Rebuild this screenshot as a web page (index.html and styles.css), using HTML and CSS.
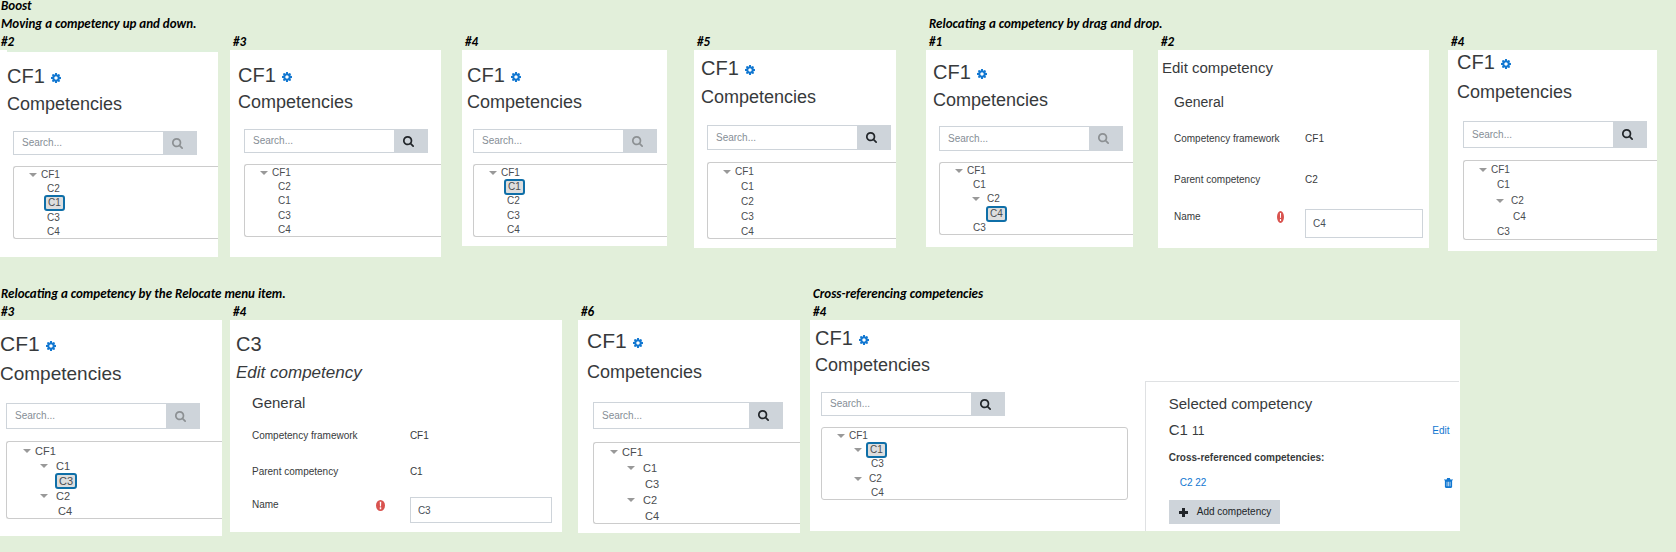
FILE: index.html
```html
<!DOCTYPE html>
<html lang="en">
<head>
<meta charset="utf-8">
<title>Boost – competency frameworks</title>
<link rel="stylesheet" href="styles.css">
</head>
<body>
<svg class="sprite" aria-hidden="true">
  <symbol id="cog" viewBox="0 128 1536 1536"><path d="M1024 896q0-106-75-181t-181-75-181 75-75 181 75 181 181 75 181-75 75-181zm512-109v222q0 12-8 23t-20 13l-185 28q-19 54-39 91 35 50 107 138 10 12 10 25t-9 23q-27 37-99 108t-94 71q-12 0-26-9l-138-108q-44 23-91 38-16 136-29 186-7 28-36 28h-222q-14 0-24.500-8.500t-11.500-21.500l-28-184q-49-16-90-37l-141 107q-10 9-25 9-14 0-25-11-126-114-165-168-7-10-7-23 0-12 8-23 15-21 51-66.500t54-70.500q-27-50-41-99l-183-27q-13-2-21-12.500t-8-23.500v-222q0-12 8-23t19-13l186-28q14-46 39-92-40-57-107-138-10-12-10-24 0-10 9-23 26-36 98.500-107.500t94.500-71.500q13 0 26 10l138 107q44-23 91-38 16-136 29-186 7-28 36-28h222q14 0 24.500 8.500t11.500 21.500l28 184q49 16 90 37l142-107q9-9 24-9 13 0 25 10 129 119 165 170 7 8 7 22 0 12-8 23-15 21-51 66.500t-54 70.500q26 50 41 98l183 28q13 2 21 12.500t8 23.500z"/></symbol>
  <symbol id="magnifier" viewBox="0 128 1664 1664"><path d="M1152 832q0-185-131.500-316.500t-316.500-131.500-316.500 131.500-131.500 316.500 131.500 316.500 316.500 131.500 316.500-131.500 131.500-316.500zm512 832q0 52-38 90t-90 38q-54 0-90-38l-343-342q-179 124-399 124-143 0-273.500-55.500t-225-150-150-225-55.500-273.500 55.500-273.500 150-225 225-150 273.500-55.500 273.500 55.500 225 150 150 225 55.500 273.500q0 220-124 399l343 343q37 37 37 90z"/></symbol>
  <symbol id="caret" viewBox="0 0 8 5" preserveAspectRatio="none"><path d="M0 0h8L4 5z"/></symbol>
  <symbol id="required" viewBox="0 0 12 12" preserveAspectRatio="none"><path fill-rule="evenodd" d="M6 0a6 6 0 1 1 0 12A6 6 0 0 1 6 0zM5 2l.3 5h1.400L7 2zM5 8v2h2V8z"/></symbol>
  <symbol id="plus" viewBox="0 0 9 9"><path d="M3 0h3v3h3v3H6v3H3V6H0V3h3z"/></symbol>
  <symbol id="trash" viewBox="0 0 10 11"><path fill-rule="evenodd" d="M3.500 0h3l.6 1.500H10v1H9V10l-1 1H2l-1-1V2.500H0v-1h2.900zM3 4v5h.7V4zm1.700 0v5h.7V4zm1.700 0v5h.7V4z"/></symbol>
</svg>

<main class="board">
  <h1 class="label label-top">Boost</h1>

  <div class="band band-upper">
    <section class="group">
      <h2 class="label">Moving a competency up and down.</h2>
      <div class="steps steps-moving">
        <figure class="step">
          <figcaption class="label">#2</figcaption>
          <div class="panel move-2">
            <h3 class="title">CF1 <button class="gear" type="button" aria-label="Settings"><svg><use href="#cog"/></svg></button></h3>
            <h4 class="subtitle">Competencies</h4>
            <form class="search"><input class="query" type="text" placeholder="Search..." aria-label="Search"><button class="go" type="button" aria-label="Search" disabled><svg><use href="#magnifier"/></svg></button></form>
            <ul class="tree">
              <li class="root"><svg class="caret"><use href="#caret"/></svg><span>CF1</span></li>
              <li class="leaf"><span>C2</span></li>
              <li class="leaf"><span class="selected">C1</span></li>
              <li class="leaf"><span>C3</span></li>
              <li class="leaf"><span>C4</span></li>
            </ul>
          </div>
        </figure>
        <figure class="step">
          <figcaption class="label">#3</figcaption>
          <div class="panel move-3">
            <h3 class="title">CF1 <button class="gear" type="button" aria-label="Settings"><svg><use href="#cog"/></svg></button></h3>
            <h4 class="subtitle">Competencies</h4>
            <form class="search"><input class="query" type="text" placeholder="Search..." aria-label="Search"><button class="go" type="button" aria-label="Search"><svg><use href="#magnifier"/></svg></button></form>
            <ul class="tree">
              <li class="root"><svg class="caret"><use href="#caret"/></svg><span>CF1</span></li>
              <li class="leaf"><span>C2</span></li>
              <li class="leaf"><span>C1</span></li>
              <li class="leaf"><span>C3</span></li>
              <li class="leaf"><span>C4</span></li>
            </ul>
          </div>
        </figure>
        <figure class="step">
          <figcaption class="label">#4</figcaption>
          <div class="panel move-4">
            <h3 class="title">CF1 <button class="gear" type="button" aria-label="Settings"><svg><use href="#cog"/></svg></button></h3>
            <h4 class="subtitle">Competencies</h4>
            <form class="search"><input class="query" type="text" placeholder="Search..." aria-label="Search"><button class="go" type="button" aria-label="Search" disabled><svg><use href="#magnifier"/></svg></button></form>
            <ul class="tree">
              <li class="root"><svg class="caret"><use href="#caret"/></svg><span>CF1</span></li>
              <li class="leaf"><span class="selected">C1</span></li>
              <li class="leaf"><span>C2</span></li>
              <li class="leaf"><span>C3</span></li>
              <li class="leaf"><span>C4</span></li>
            </ul>
          </div>
        </figure>
        <figure class="step">
          <figcaption class="label">#5</figcaption>
          <div class="panel move-5">
            <h3 class="title">CF1 <button class="gear" type="button" aria-label="Settings"><svg><use href="#cog"/></svg></button></h3>
            <h4 class="subtitle">Competencies</h4>
            <form class="search"><input class="query" type="text" placeholder="Search..." aria-label="Search"><button class="go" type="button" aria-label="Search"><svg><use href="#magnifier"/></svg></button></form>
            <ul class="tree">
              <li class="root"><svg class="caret"><use href="#caret"/></svg><span>CF1</span></li>
              <li class="leaf"><span>C1</span></li>
              <li class="leaf"><span>C2</span></li>
              <li class="leaf"><span>C3</span></li>
              <li class="leaf"><span>C4</span></li>
            </ul>
          </div>
        </figure>
      </div>
    </section>

    <section class="group group-inset">
      <h2 class="label">Relocating a competency by drag and drop.</h2>
      <div class="steps steps-drag">
        <figure class="step">
          <figcaption class="label">#1</figcaption>
          <div class="panel drag-1">
            <h3 class="title">CF1 <button class="gear" type="button" aria-label="Settings"><svg><use href="#cog"/></svg></button></h3>
            <h4 class="subtitle">Competencies</h4>
            <form class="search"><input class="query" type="text" placeholder="Search..." aria-label="Search"><button class="go" type="button" aria-label="Search" disabled><svg><use href="#magnifier"/></svg></button></form>
            <ul class="tree">
              <li class="root"><svg class="caret"><use href="#caret"/></svg><span>CF1</span></li>
              <li class="leaf"><span>C1</span></li>
              <li class="branch"><svg class="caret"><use href="#caret"/></svg><span>C2</span></li>
              <li class="leaf-deep"><span class="selected">C4</span></li>
              <li class="leaf"><span>C3</span></li>
            </ul>
          </div>
        </figure>
        <figure class="step">
          <figcaption class="label">#2</figcaption>
          <div class="panel editor drag-2">
            <h3 class="edit-title">Edit competency</h3>
            <form class="fields">
              <h4 class="legend">General</h4>
              <div class="field"><span>Competency framework</span><span>CF1</span></div>
              <div class="field"><span>Parent competency</span><span>C2</span></div>
              <div class="field"><label class="name-label" for="name-drag">Name<svg class="required" role="img" aria-label="Required"><use href="#required"/></svg></label><input class="name" id="name-drag" type="text" value="C4"></div>
            </form>
          </div>
        </figure>
        <figure class="step">
          <figcaption class="label">#4</figcaption>
          <div class="panel drag-4">
            <h3 class="title">CF1 <button class="gear" type="button" aria-label="Settings"><svg><use href="#cog"/></svg></button></h3>
            <h4 class="subtitle">Competencies</h4>
            <form class="search"><input class="query" type="text" placeholder="Search..." aria-label="Search"><button class="go" type="button" aria-label="Search"><svg><use href="#magnifier"/></svg></button></form>
            <ul class="tree">
              <li class="root"><svg class="caret"><use href="#caret"/></svg><span>CF1</span></li>
              <li class="leaf"><span>C1</span></li>
              <li class="branch"><svg class="caret"><use href="#caret"/></svg><span>C2</span></li>
              <li class="leaf-deep"><span>C4</span></li>
              <li class="leaf"><span>C3</span></li>
            </ul>
          </div>
        </figure>
      </div>
    </section>
  </div>

  <div class="band band-lower">
    <section class="group">
      <h2 class="label">Relocating a competency by the Relocate menu item.</h2>
      <div class="steps steps-menu">
        <figure class="step">
          <figcaption class="label">#3</figcaption>
          <div class="panel menu-3">
            <h3 class="title">CF1 <button class="gear" type="button" aria-label="Settings"><svg><use href="#cog"/></svg></button></h3>
            <h4 class="subtitle">Competencies</h4>
            <form class="search"><input class="query" type="text" placeholder="Search..." aria-label="Search"><button class="go" type="button" aria-label="Search" disabled><svg><use href="#magnifier"/></svg></button></form>
            <ul class="tree tree-large">
              <li class="root"><svg class="caret"><use href="#caret"/></svg><span>CF1</span></li>
              <li class="branch"><svg class="caret"><use href="#caret"/></svg><span>C1</span></li>
              <li class="leaf-deep"><span class="selected">C3</span></li>
              <li class="branch"><svg class="caret"><use href="#caret"/></svg><span>C2</span></li>
              <li class="leaf-deep"><span>C4</span></li>
            </ul>
          </div>
        </figure>
        <figure class="step">
          <figcaption class="label">#4</figcaption>
          <div class="panel editor menu-4">
            <h3 class="title">C3</h3>
            <h4 class="edit-title">Edit competency</h4>
            <form class="fields">
              <h5 class="legend">General</h5>
              <div class="field"><span>Competency framework</span><span>CF1</span></div>
              <div class="field"><span>Parent competency</span><span>C1</span></div>
              <div class="field"><label class="name-label" for="name-menu">Name<svg class="required" role="img" aria-label="Required"><use href="#required"/></svg></label><input class="name" id="name-menu" type="text" value="C3"></div>
            </form>
          </div>
        </figure>
        <figure class="step">
          <figcaption class="label">#6</figcaption>
          <div class="panel menu-6">
            <h3 class="title">CF1 <button class="gear" type="button" aria-label="Settings"><svg><use href="#cog"/></svg></button></h3>
            <h4 class="subtitle">Competencies</h4>
            <form class="search"><input class="query" type="text" placeholder="Search..." aria-label="Search"><button class="go" type="button" aria-label="Search"><svg><use href="#magnifier"/></svg></button></form>
            <ul class="tree tree-large">
              <li class="root"><svg class="caret"><use href="#caret"/></svg><span>CF1</span></li>
              <li class="branch"><svg class="caret"><use href="#caret"/></svg><span>C1</span></li>
              <li class="leaf-deep"><span>C3</span></li>
              <li class="branch"><svg class="caret"><use href="#caret"/></svg><span>C2</span></li>
              <li class="leaf-deep"><span>C4</span></li>
            </ul>
          </div>
        </figure>
      </div>
    </section>

    <section class="group group-inset group-cross">
      <h2 class="label">Cross-referencing competencies</h2>
      <figure class="step">
        <figcaption class="label">#4</figcaption>
        <div class="panel cross-4">
          <h3 class="title">CF1 <button class="gear" type="button" aria-label="Settings"><svg><use href="#cog"/></svg></button></h3>
          <h4 class="subtitle">Competencies</h4>
          <div class="split">
            <div class="split-tree">
              <form class="search"><input class="query" type="text" placeholder="Search..." aria-label="Search"><button class="go" type="button" aria-label="Search"><svg><use href="#magnifier"/></svg></button></form>
              <ul class="tree">
                <li class="root"><svg class="caret"><use href="#caret"/></svg><span>CF1</span></li>
                <li class="branch"><svg class="caret"><use href="#caret"/></svg><span class="selected">C1</span></li>
                <li class="leaf-deep"><span>C3</span></li>
                <li class="branch"><svg class="caret"><use href="#caret"/></svg><span>C2</span></li>
                <li class="leaf-deep"><span>C4</span></li>
              </ul>
            </div>
            <aside class="detail">
              <h4 class="detail-title">Selected competency</h4>
              <div class="detail-name">
                <h5 class="competency">C1 <small>11</small></h5>
                <a class="link" href="#edit">Edit</a>
              </div>
              <p class="cross-label">Cross-referenced competencies:</p>
              <div class="cross-row">
                <a class="link" href="#c2">C2 22</a>
                <button class="delete" type="button" aria-label="Delete"><svg><use href="#trash"/></svg></button>
              </div>
              <button class="add" type="button"><svg><use href="#plus"/></svg>Add competency</button>
            </aside>
          </div>
        </div>
      </figure>
    </section>
  </div>
</main>
</body>
</html>
```

FILE: styles.css
```css
* {
  box-sizing: border-box;
}

body {
  margin: 0;
  background: #e2efda;
  color: #373a3c;
  font: 10px/16px "Liberation Sans", Arial, sans-serif;
}

h1, h2, h3, h4, h5, p, ul, figure {
  margin: 0;
  padding: 0;
  font-weight: 400;
}

button, input {
  margin: 0;
  padding: 0;
  border: 0;
  border-radius: 0;
  background: none;
  color: inherit;
  font: inherit;
}

svg {
  display: block;
  flex: none;
  fill: currentColor;
}

.sprite {
  position: absolute;
  width: 0;
  height: 0;
}

/* Board: captions and the grid of steps */

.label {
  padding: 1px 0 0 1px;
  color: #000;
  font: italic 700 13px/17px Carlito, Lato, sans-serif;
  white-space: nowrap;
}

.label-top {
  padding: 0 0 2px 1px;
  line-height: 12px;
}

.step + .step > .label,
.group-inset .label {
  padding-left: 3px;
}

.band {
  display: grid;
}

.band-upper {
  grid-template-columns: minmax(0, 926fr) minmax(0, 750fr);
}

.band-lower {
  grid-template-columns: minmax(0, 810fr) minmax(0, 866fr);
  margin-top: 27px;
}

.steps {
  display: grid;
  align-items: start;
}

.steps-moving {
  grid-template-columns: minmax(0, 230fr) repeat(3, minmax(0, 232fr));
}

.steps-drag {
  grid-template-columns: minmax(0, 232fr) minmax(0, 290fr) minmax(0, 228fr);
}

.steps-menu {
  grid-template-columns: minmax(0, 230fr) minmax(0, 348fr) minmax(0, 232fr);
}

.group-cross {
  padding-right: 25%;
}

/* Tree panel */

.panel {
  --top: 13px;
  --left: 8px;
  --right: 20px;
  --bottom: 20px;
  --heading-gap: 4px;
  --search-gap: 15px;
  --search-height: 24px;
  --search-width: 184px;
  --tree-gap: 11px;
  --tree-height: 73px;
  margin-right: var(--right);
  padding: var(--top) 0 var(--bottom) var(--left);
  background: #fff;
  overflow: hidden;
}

.title {
  display: flex;
  align-items: baseline;
  gap: 6px;
  font-size: 20px;
  line-height: 24px;
}

.subtitle {
  margin-top: var(--heading-gap);
  font-size: 18px;
  line-height: 24px;
}

.gear {
  color: #1177d1;
  line-height: 10px;
}

.gear svg {
  width: 10px;
  height: 10px;
}

.search {
  display: flex;
  max-width: var(--search-width);
  height: var(--search-height);
  margin: var(--search-gap) 4px 0 6px;
}

.query {
  flex: 1;
  min-width: 0;
  padding: 0 8px;
  border: 1px solid #ced4da;
  border-right: 0;
}

.query::placeholder {
  color: #868e96;
  opacity: 1;
}

.go {
  flex: none;
  width: 34px;
  padding-left: 9px;
  background: #ced4da;
  color: #212529;
}

.go:disabled {
  color: #8c9093;
}

.go svg {
  width: 11px;
  height: 11px;
}

.tree {
  display: grid;
  grid-auto-rows: minmax(0, 1fr);
  height: var(--tree-height);
  margin: var(--tree-gap) 0 0 6px;
  border: 1px solid #ccc;
  border-right: 0;
  border-radius: 3px 0 0 3px;
  color: #4a4d50;
  line-height: 12px;
  list-style: none;
}

.tree li {
  display: flex;
  align-items: center;
  padding-top: 2px;
}

.root {
  gap: 4px;
  padding-left: 15px;
}

.leaf {
  padding-left: 33px;
}

.branch {
  gap: 7px;
  padding-left: 32px;
}

.leaf-deep {
  padding-left: 49px;
}

.tree-large {
  font-size: 11px;
}

.tree-large .root {
  padding-left: 16px;
}

.tree-large .branch {
  gap: 8px;
  padding-left: 33px;
}

.tree-large .leaf-deep {
  padding-left: 51px;
}

.caret {
  width: 8px;
  height: 4px;
  color: #999;
}

.selected {
  flex: none;
  margin: -2px 0 -2px -3px;
  padding: 0 2px;
  border: 2px solid #0f6fa8;
  border-radius: 3px;
  background: #dedede;
}

/* Spacing of the single steps */

.move-2 {
  --top: 14px;
  --left: 7px;
  --right: 12px;
  --bottom: 18px;
  background: linear-gradient(#dff0dc, #dff0dc) 7px 0 / 100% 2px no-repeat #fff;
}

.move-3 {
  --right: 21px;
  --heading-gap: 3px;
}

.move-4 {
  --left: 5px;
  --right: 27px;
  --bottom: 9px;
  --heading-gap: 3px;
}

.move-5 {
  --top: 6px;
  --left: 7px;
  --right: 30px;
  --bottom: 9px;
  --heading-gap: 5px;
  --search-gap: 16px;
  --search-height: 25px;
  --tree-gap: 12px;
  --tree-height: 77px;
}

.drag-1 {
  --top: 10px;
  --left: 7px;
  --right: 25px;
  --bottom: 12px;
  --search-gap: 14px;
  --search-height: 25px;
}

.drag-4 {
  --top: 0px;
  --left: 9px;
  --right: 19px;
  --bottom: 11px;
  --heading-gap: 6px;
  --search-gap: 17px;
  --search-height: 27px;
  --tree-gap: 12px;
  --tree-height: 80px;
}

.menu-3 {
  --top: 12px;
  --left: 0px;
  --right: 8px;
  --bottom: 17px;
  --heading-gap: 6px;
  --search-gap: 17px;
  --search-height: 26px;
  --search-width: 194px;
  --tree-gap: 12px;
  --tree-height: 78px;
}

.menu-6 {
  --top: 9px;
  --left: 9px;
  --right: 10px;
  --bottom: 9px;
  --heading-gap: 7px;
  --search-gap: 18px;
  --search-height: 27px;
  --search-width: 190px;
  --tree-gap: 13px;
  --tree-height: 82px;
}

.menu-3 .title,
.menu-6 .title {
  font-size: 21px;
}

.menu-3 .subtitle {
  font-size: 19px;
}

/* Edit form */

.edit-title,
.legend {
  line-height: 24px;
}

.field {
  display: grid;
  grid-template-columns: minmax(0, 10fr) minmax(0, 9fr);
  align-items: start;
}

.name-label {
  display: flex;
  align-items: center;
  justify-content: space-between;
}

.required {
  color: #d9534f;
}

.name {
  width: 100%;
  padding: 0 7px;
  border: 1px solid #ced4da;
  color: #495057;
}

.drag-2 {
  --top: 6px;
  --left: 4px;
  --right: 19px;
  --bottom: 10px;
}

.drag-2 .edit-title {
  font-size: 15px;
}

.drag-2 .fields {
  padding: 10px 6px 0 12px;
}

.drag-2 .legend {
  margin-bottom: 17px;
  font-size: 14px;
}

.drag-2 .field + .field {
  margin-top: 25px;
}

.drag-2 .field:last-child {
  margin-top: 21px;
}

.drag-2 .name {
  height: 29px;
}

.drag-2 .required {
  width: 7px;
  height: 12px;
  margin-right: 21px;
}

.menu-4 {
  --top: 12px;
  --left: 6px;
  --right: 16px;
  --bottom: 9px;
}

.menu-4 .edit-title {
  margin-top: 5px;
  font-size: 17px;
  font-style: italic;
}

.menu-4 .fields {
  padding: 6px 10px 0 16px;
}

.menu-4 .legend {
  margin-bottom: 13px;
  font-size: 15px;
}

.menu-4 .field + .field {
  margin-top: 20px;
}

.menu-4 .field:last-child {
  margin-top: 17px;
}

.menu-4 .name {
  height: 26px;
}

.menu-4 .required {
  width: 9px;
  height: 11px;
  margin-right: 25px;
}

/* Cross-referencing panel */

.cross-4 {
  --top: 6px;
  --left: 5px;
  --right: 0px;
  --bottom: 0px;
  --heading-gap: 3px;
  --search-gap: 11px;
}

.split {
  display: grid;
  grid-template-columns: minmax(0, 330fr) minmax(0, 315fr);
  margin-top: 4px;
}

.split-tree .tree {
  margin-right: 17px;
  border-right: 1px solid #ccc;
  border-radius: 3px;
}

.detail {
  padding: 12px 6px 7px 23px;
  border: solid #dfe1e3;
  border-width: 1px 0 0 1px;
}

.detail-title {
  font-size: 15px;
  line-height: 20px;
}

.detail-name {
  display: flex;
  align-items: center;
  justify-content: space-between;
  margin: 6px 4px 9px 0;
}

.competency {
  font-size: 15px;
  line-height: 20px;
}

.competency small {
  font-size: 12px;
}

.link {
  color: #1177d1;
  text-decoration: none;
}

.cross-label {
  font-weight: 700;
}

.cross-row {
  display: flex;
  align-items: center;
  justify-content: space-between;
  margin: 9px 0;
  padding-left: 11px;
}

.delete {
  color: #1177d1;
}

.delete svg {
  width: 9px;
  height: 10px;
}

.add {
  display: flex;
  align-items: center;
  gap: 9px;
  height: 24px;
  padding: 0 9px 0 10px;
  background: #ced4da;
  color: #212529;
}

.add svg {
  width: 9px;
  height: 9px;
}
```
